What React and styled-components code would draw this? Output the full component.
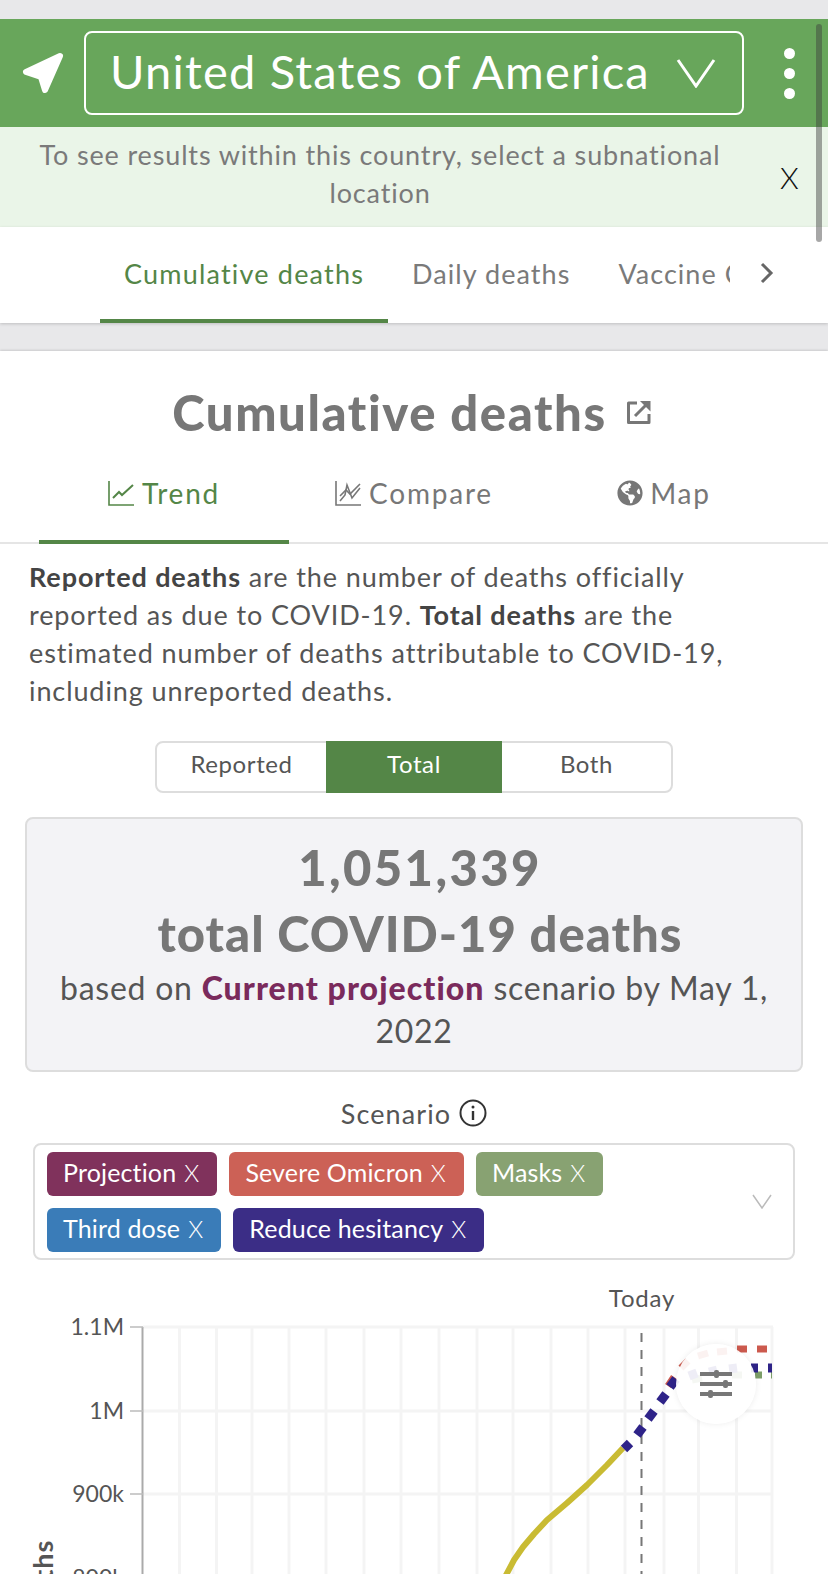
import React from "react";
import styled, { createGlobalStyle } from "styled-components";
import { FaGlobeAmericas } from "react-icons/fa";

const GlobalStyle = createGlobalStyle`
  html, body {
    margin: 0;
    padding: 0;
    height: 100%;
    overflow: hidden;
    background: #e8e8ea;
    font-family: Lato, "Noto Sans", sans-serif;
  }
  * {
    box-sizing: border-box;
  }
`;

const tags = [
  [
    { id: "projection", label: "Projection", color: "#80325c" },
    { id: "omicron", label: "Severe Omicron", color: "#cc6156" },
    { id: "masks", label: "Masks", color: "#88a272" }
  ],
  [
    { id: "third", label: "Third dose", color: "#3a7cb8" },
    { id: "hesitancy", label: "Reduce hesitancy", color: "#3b2d86" }
  ]
];

const gridX = [179.5, 216.5, 252, 289, 326, 364, 401, 439, 477, 513, 551, 588, 625, 664, 698.5, 736.5, 772];
const gridY = [1327, 1411, 1494, 1578];
const ticks = [
  { y: 1327, label: "1.1M" },
  { y: 1411, label: "1M" },
  { y: 1494, label: "900k" },
  { y: 1578, label: "800k" }
];

// projection dashes, drawn one by one so they land where the scenarios do
const dashes = [
  {
    color: "#cc5a4e",
    width: 7,
    segments: [
      [668, 1386, 674, 1377],
      [681, 1368, 688, 1361],
      [698, 1356, 708, 1353],
      [717, 1352, 727, 1351],
      [737, 1349, 747, 1349],
      [757, 1349, 767, 1349]
    ]
  },
  {
    color: "#7c9e68",
    width: 7,
    segments: [
      [692, 1380, 702, 1378],
      [732, 1375, 742, 1375],
      [755, 1375, 762, 1375],
      [771, 1375, 772, 1375]
    ]
  },
  {
    color: "#2e2388",
    width: 9,
    segments: [
      [624, 1449, 630, 1443],
      [637, 1435, 643, 1427],
      [648, 1419, 654, 1411],
      [660, 1402, 666, 1394],
      [670, 1387, 676, 1379],
      [689, 1376, 697, 1373],
      [709, 1372, 717, 1370],
      [729, 1369, 737, 1368],
      [751, 1368, 758, 1368],
      [768, 1368, 772, 1368]
    ]
  }
];

const NavArrow = () => (
  <svg width="44" height="44" viewBox="0 0 44 44">
    <path
      d="M39 5 L5 21 L20 26 L24 39 Z"
      fill="#fff"
      stroke="#fff"
      strokeWidth="6"
      strokeLinejoin="round"
    />
  </svg>
);

const Chevron = ({ size, color, width }) => (
  <svg width={size} height={size * 0.75} viewBox="0 0 40 30" fill="none">
    <path d="M2 2 L20 28 L38 2" stroke={color} strokeWidth={width} />
  </svg>
);

const ExternalIcon = () => (
  <svg width="26" height="26" viewBox="0 0 26 26" fill="none" stroke="#777" strokeWidth="3">
    <path d="M11 4 H2.5 V23.5 H23 V15" strokeLinejoin="round" />
    <path d="M9 17 L22 4" />
    <path d="M14 2 H24.500 V12.500 Z" fill="#777" stroke="none" />
  </svg>
);

const TrendIcon = ({ color }) => (
  <svg width="27" height="25" viewBox="0 0 27 25" fill="none" stroke={color} strokeWidth="1.600">
    <path d="M1 0 V24 H26" />
    <path d="M5 17 L11 11 L14 14 L25 4" strokeWidth="2" />
  </svg>
);

const CompareIcon = ({ color }) => (
  <svg width="27" height="25" viewBox="0 0 27 25" fill="none" stroke={color} strokeWidth="1.600">
    <path d="M1 0 V24 H26" />
    <path d="M5 15 L11 9 L15 13 L25 3" />
    <path d="M5 20 L10 14 L12 4 L17 17 L25 7" />
  </svg>
);

const InfoIcon = () => (
  <svg width="28" height="28" viewBox="0 0 28 28" fill="none" stroke="#333">
    <circle cx="14" cy="14" r="12.500" strokeWidth="2" />
    <path d="M14 12 V21" strokeWidth="2.400" />
    <circle cx="14" cy="8" r="1.500" fill="#333" stroke="none" />
  </svg>
);

const SlidersIcon = () => (
  <svg width="34" height="28" viewBox="0 0 34 28" fill="#777">
    <rect x="1" y="2" width="32" height="4" />
    <rect x="15" y="0" width="5" height="8" rx="2" />
    <rect x="1" y="12" width="32" height="4" />
    <rect x="24" y="10" width="5" height="8" rx="2" />
    <rect x="1" y="22" width="32" height="4" />
    <rect x="9" y="20" width="5" height="8" rx="2" />
  </svg>
);

const App = () => {
  return (
    <Page>
      <GlobalStyle />
      <TopGap />
      <Header>
        <LocateButton>
          <NavArrow />
        </LocateButton>
        <LocationSelect>
          <LocationName>United States of America</LocationName>
          <Chevron size={40} color="#fff" width={3} />
        </LocationSelect>
        <MenuDots>
          <i />
          <i />
          <i />
        </MenuDots>
      </Header>
      <Notice>
        <NoticeText>To see results within this country, select a subnational location</NoticeText>
        <NoticeClose>X</NoticeClose>
      </Notice>
      <TabBar>
        <TabItem active>Cumulative deaths</TabItem>
        <TabItem>Daily deaths</TabItem>
        <TabClip>Vaccine Coverage</TabClip>
        <TabArrow>
          <svg width="14" height="22" viewBox="0 0 14 22" fill="none">
            <path d="M2 2 L11 11 L2 20" stroke="#666" strokeWidth="3" />
          </svg>
        </TabArrow>
      </TabBar>
      <Scrollbar />

      <Card>
        <Title>
          <span>Cumulative deaths</span> <ExternalIcon />
        </Title>
        <ViewTabs>
          <ViewTab active>
            <TrendIcon color="#548647" /> Trend
          </ViewTab>
          <ViewTab>
            <CompareIcon color="#777" /> Compare
          </ViewTab>
          <ViewTab>
            <FaGlobeAmericas size={26} color="#777" /> Map
          </ViewTab>
        </ViewTabs>
        <Description>
          <strong>Reported deaths</strong> are the number of deaths officially reported as due to
          COVID-19. <strong>Total deaths</strong> are the estimated number of deaths attributable to
          COVID-19, including unreported deaths.
        </Description>
        <Segmented>
          <Segment>Reported</Segment>
          <Segment active wide>
            Total
          </Segment>
          <Segment>Both</Segment>
        </Segmented>
        <SummaryBox>
          <BigNumber spacing="2.4px">1,051,339</BigNumber>
          <BigNumber spacing="1px">total COVID-19 deaths</BigNumber>
          <SummaryText>
            based on <Scenario>Current projection</Scenario> scenario by May 1, 2022
          </SummaryText>
        </SummaryBox>
        <ScenarioLabel>
          <span>Scenario</span> <InfoIcon />
        </ScenarioLabel>
        <ScenarioSelect>
          <TagRows>
            {tags.map((row, i) => (
              <TagRow key={i}>
                {row.map(tag => (
                  <Tag key={tag.id} color={tag.color}>
                    {tag.label} <small>X</small>
                  </Tag>
                ))}
              </TagRow>
            ))}
          </TagRows>
          <Chevron size={20} color="#bbb" width={3} />
        </ScenarioSelect>
        <ChartArea>
          <svg width="828" height="314" viewBox="0 1260 828 314">
            {gridX.map(x => (
              <line key={x} x1={x} x2={x} y1="1327" y2="1574" stroke="#f4f4f4" strokeWidth="3" />
            ))}
            {gridY.map(y => (
              <line key={y} x1="143" x2="773" y1={y} y2={y} stroke="#f4f4f4" strokeWidth="3" />
            ))}
            <line x1="142.500" x2="142.500" y1="1327" y2="1574" stroke="#aaa" strokeWidth="2" />
            {ticks.map(t => (
              <g key={t.label}>
                <line x1="130" x2="143" y1={t.y} y2={t.y} stroke="#bbb" strokeWidth="1.500" />
                <ChartText x="124" y={t.y + 8} textAnchor="end">
                  {t.label}
                </ChartText>
              </g>
            ))}
            <TodayText x="642" y="1307" textAnchor="middle">
              Today
            </TodayText>
            <line x1="641.500" x2="641.500" y1="1333" y2="1574" stroke="#777" strokeWidth="2" strokeDasharray="9 8" />
            <AxisLabel transform="translate(53 1626) rotate(-90)">deaths</AxisLabel>
            <path
              d="M505 1577 L514 1560 L523 1547 L534 1534 L547 1520 L567 1503 L587 1485 L607 1465 L623 1448"
              fill="none"
              stroke="#c9bb33"
              strokeWidth="6"
              strokeLinejoin="round"
            />
            {dashes.map(d =>
              d.segments.map(([x1, y1, x2, y2]) => (
                <line key={`${d.color}-${x1}`} x1={x1} y1={y1} x2={x2} y2={y2} stroke={d.color} strokeWidth={d.width} />
              ))
            )}
          </svg>
          <FloatButton>
            <SlidersIcon />
          </FloatButton>
        </ChartArea>
      </Card>
    </Page>
  );
};

const Page = styled.div`
  position: relative;
  height: 100vh;
  overflow: hidden;
  background: #e8e8ea;
`;

const TopGap = styled.div`
  height: 19px;
`;

const Header = styled.header`
  display: flex;
  align-items: center;
  height: 108px;
  background: #68a65b;
`;

const LocateButton = styled.div`
  display: flex;
  justify-content: center;
  width: 84px;
  padding-left: 2px;
`;

const LocationSelect = styled.div`
  display: flex;
  align-items: center;
  justify-content: space-between;
  width: 660px;
  height: 84px;
  padding: 0 26px 0 24px;
  border: 2px solid #fff;
  border-radius: 8px;
  color: #fff;
`;

const LocationName = styled.span`
  padding-bottom: 4px;
  font-size: 47px;
  letter-spacing: 1.2px;
  white-space: nowrap;
`;

const MenuDots = styled.div`
  display: flex;
  flex: 1;
  flex-direction: column;
  align-items: center;
  gap: 9px;
  padding-left: 6px;

  i {
    width: 11px;
    height: 11px;
    border-radius: 50%;
    background: #fff;
  }
`;

const Notice = styled.div`
  display: flex;
  align-items: center;
  height: 100px;
  background: #eaf5e8;
`;

const NoticeText = styled.div`
  width: 760px;
  padding: 0 30px 6px;
  color: #7a7a7a;
  font-size: 27px;
  letter-spacing: 0.85px;
  line-height: 38px;
  text-align: center;
`;

const NoticeClose = styled.div`
  margin-left: 20px;
  color: #111;
  font-size: 30px;
  font-weight: 300;
`;

const TabBar = styled.nav`
  display: flex;
  align-items: stretch;
  height: 96px;
  padding-left: 100px;
  background: #fff;
  box-shadow: 0 1px 3px rgba(0, 0, 0, 0.18);
`;

const TabItem = styled.div`
  display: flex;
  align-items: center;
  padding: 0 24px;
  border-bottom: 4px solid ${p => (p.active ? "#548647" : "transparent")};
  color: ${p => (p.active ? "#548647" : "#7a7a7a")};
  font-size: 27px;
  letter-spacing: ${p => (p.active ? "1.2px" : "1.05px")};
  white-space: nowrap;
`;

const TabClip = styled(TabItem)`
  width: 136px;
  padding-right: 0;
  overflow: hidden;
`;

const TabArrow = styled.div`
  display: flex;
  align-items: center;
  margin-left: 30px;
  padding-bottom: 4px;
`;

const Scrollbar = styled.div`
  position: absolute;
  top: 24px;
  left: 816px;
  width: 6px;
  height: 218px;
  border-radius: 3px;
  background: rgba(60, 60, 60, 0.45);
`;

const Card = styled.main`
  margin-top: 28px;
  height: 1300px;
  background: #fff;
  box-shadow: 0 -1px 2px rgba(0, 0, 0, 0.12);
`;

const Title = styled.h1`
  display: flex;
  align-items: center;
  justify-content: center;
  gap: 19px;
  height: 119px;
  margin: 0;
  padding: 2px 4px 0 0;
  color: #777;
  font-size: 49px;
  font-weight: 900;
  letter-spacing: 1.6px;
`;

const ViewTabs = styled.div`
  display: flex;
  height: 74px;
  padding: 0 39px;
  border-bottom: 2px solid #e5e5e5;
`;

const ViewTab = styled.div`
  display: flex;
  flex: 1;
  align-items: center;
  justify-content: center;
  gap: 7px;
  margin-bottom: -2px;
  padding-bottom: 24px;
  border-bottom: 4px solid ${p => (p.active ? "#548647" : "transparent")};
  color: ${p => (p.active ? "#548647" : "#777")};
  font-size: 28px;
  letter-spacing: 1.8px;
`;

const Description = styled.p`
  margin: 14px 0 0;
  padding: 0 70px 0 29px;
  color: #555;
  font-size: 27px;
  letter-spacing: 0.9px;
  line-height: 38px;

  strong {
    color: #444;
    font-weight: 700;
  }
`;

const Segmented = styled.div`
  display: flex;
  width: 518px;
  height: 52px;
  margin: 31px auto 0;
  border: 2px solid #ddd;
  border-radius: 8px;
`;

const Segment = styled.div`
  display: flex;
  align-items: center;
  justify-content: center;
  flex: ${p => (p.wide ? "0 0 176px" : "1")};
  margin: ${p => (p.active ? "-2px 0" : "0")};
  padding-bottom: 7px;
  background: ${p => (p.active ? "#548647" : "transparent")};
  color: ${p => (p.active ? "#fff" : "#555")};
  font-size: 24px;
  letter-spacing: 0.6px;
`;

const SummaryBox = styled.section`
  width: 778px;
  height: 255px;
  margin: 24px 0 0 25px;
  padding-top: 15px;
  border: 2px solid #ddd;
  border-radius: 8px;
  background: #f3f3f6;
  text-align: center;
`;

const BigNumber = styled.div`
  padding-left: 12px;
  color: #777;
  font-size: 49px;
  font-weight: 900;
  letter-spacing: ${p => p.spacing};
  line-height: 66px;
`;

const SummaryText = styled.div`
  padding: 0 20px;
  color: #555;
  font-size: 32px;
  letter-spacing: 0.75px;
  line-height: 43px;
`;

const Scenario = styled.b`
  color: #7a2a5c;
  font-weight: 900;
  letter-spacing: 1.05px;
`;

const ScenarioLabel = styled.div`
  display: flex;
  align-items: center;
  justify-content: center;
  gap: 8px;
  height: 40px;
  margin-top: 21px;
  color: #555;
  font-size: 27px;
  letter-spacing: 1.1px;
`;

const ScenarioSelect = styled.div`
  display: flex;
  align-items: center;
  justify-content: space-between;
  width: 762px;
  height: 117px;
  margin: 10px 0 0 33px;
  padding: 0 21px 0 12px;
  border: 2px solid #ddd;
  border-radius: 8px;
`;

const TagRows = styled.div`
  display: flex;
  flex-direction: column;
  gap: 12px;
`;

const TagRow = styled.div`
  display: flex;
  gap: 12px;
`;

const Tag = styled.div`
  display: flex;
  align-items: center;
  gap: 8px;
  height: 44px;
  padding: 0 18px 3px 16px;
  border-radius: 6px;
  background: ${p => p.color};
  color: #fff;
  font-size: 25px;
  letter-spacing: 0.15px;

  small {
    font-size: 24px;
    font-weight: 300;
  }
`;

const ChartArea = styled.div`
  position: relative;
  height: 314px;
`;

const ChartText = styled.text`
  fill: #555;
  font-family: Lato, sans-serif;
  font-size: 23px;
`;

const TodayText = styled(ChartText)`
  font-size: 24px;
  letter-spacing: 0.8px;
`;

const AxisLabel = styled.text`
  fill: #555;
  font-family: Lato, sans-serif;
  font-size: 27px;
  font-weight: 700;
  letter-spacing: 1px;
`;

const FloatButton = styled.div`
  position: absolute;
  top: 84px;
  left: 676px;
  display: flex;
  align-items: center;
  justify-content: center;
  width: 80px;
  height: 80px;
  border-radius: 50%;
  background: rgba(255, 255, 255, 0.92);
  box-shadow: 0 0 6px rgba(0, 0, 0, 0.08);
`;

export default App;
